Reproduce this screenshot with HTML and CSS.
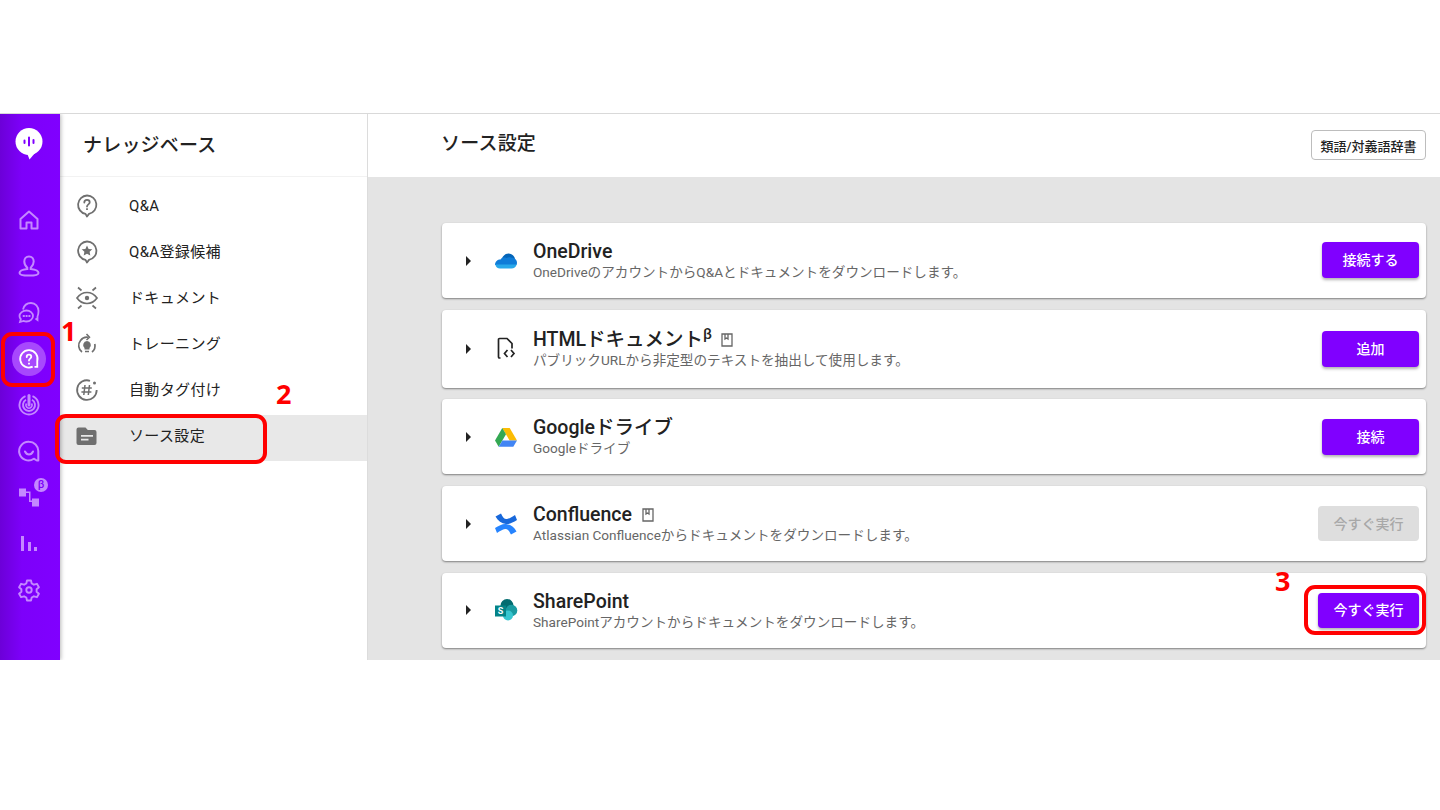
FILE: index.html
```html
<!DOCTYPE html>
<html lang="ja">
<head>
<meta charset="utf-8">
<title>ソース設定</title>
<link rel="stylesheet" href="styles.css">
</head>
<body>
<div class="top-space"></div>
<div class="app">
  <nav class="rail">
    <div class="rail-logo">
      <svg width="30" height="34" viewBox="0 0 30 34"><circle cx="15" cy="14.500" r="13.500" fill="#fff"/><path d="M13 26h8l-5.500 6.500z" fill="#fff"/><g stroke="#8000ff" stroke-width="2" stroke-linecap="round"><path d="M10.500 13.500v2.500M15 10.500v8M19.500 13v3"/></g></svg>
    </div>
    <div class="rail-item">
      <svg width="24" height="24" viewBox="0 0 24 24" fill="none" stroke="currentColor" stroke-width="2"><path d="M3.500 11L12 3.500l8.500 7.500v9.500h-6v-6h-5v6h-6z" stroke-linejoin="round"/></svg>
    </div>
    <div class="rail-item">
      <svg width="24" height="24" viewBox="0 0 24 24" fill="none" stroke="currentColor" stroke-width="2"><path d="M12 2.500c3 0 4.700 2.300 4.700 5 0 2.900-1.600 5-3 6.300v1.200c3.500.4 7.800 1.600 7.800 3.900 0 2-4 2.600-9.500 2.600s-9.500-.6-9.500-2.600c0-2.300 4.300-3.500 7.800-3.900v-1.200c-1.400-1.300-3-3.400-3-6.300 0-2.700 1.700-5 4.700-5z"/></svg>
    </div>
    <div class="rail-item">
      <svg width="24" height="24" viewBox="0 0 24 24" fill="none" stroke="currentColor" stroke-width="1.800"><path d="M6 9.500C7 5.500 10 3 14 3c4.500 0 7.500 3.500 7.500 8 0 2-.4 4-1 5.500v3.500l-2-1.500"/><path d="M9.500 10.500c3.500 0 6.500 2.500 6.500 5.500s-3 5.500-6.500 5.500c-1 0-2-.2-3-.6l-3.500 1.100.8-2.800C2.800 18 2.500 17 2.500 16c0-3 3.500-5.500 7-5.500z"/><path d="M6.500 16h.6M9.300 16h.6M12.100 16h.6" stroke-linecap="round"/></svg>
    </div>
    <div class="rail-item rail-active">
      <span class="rail-bubble">
        <svg width="24" height="24" viewBox="0 0 24 24" fill="none" stroke="#fff" stroke-width="2"><path d="M16 20.400A9.500 9.500 0 1 1 21 14.500v6h-3"/><path d="M9.500 9.800c0-1.500 1.100-2.500 2.500-2.500s2.500 1 2.500 2.300c0 2-2.500 2-2.500 4" stroke-linecap="round"/><path d="M12 16.200v1.800"/></svg>
      </span>
    </div>
    <div class="rail-item">
      <svg width="24" height="24" viewBox="0 0 24 24" fill="none" stroke="currentColor" stroke-width="1.900"><path d="M8.500 3.200a9.500 9.500 0 1 0 7 0"/><path d="M9 6.800a6 6 0 1 0 6 0"/><path d="M12 2.500v9.500" stroke-width="3" stroke-linecap="round"/><path d="M9.500 10.500a3 3 0 1 0 5 0" stroke-width="1.500"/></svg>
    </div>
    <div class="rail-item">
      <svg width="24" height="24" viewBox="0 0 24 24" fill="none" stroke="currentColor" stroke-width="2"><path d="M12 2.800a9.300 9.300 0 0 1 9.300 9.300V21.500h-1.500l-3-1.800A9.300 9.300 0 1 1 12 2.800z" stroke-linejoin="round"/><path d="M8 12.500c1 2.200 2.400 3 4 3s3-.8 4-3" stroke-linecap="round"/></svg>
    </div>
    <div class="rail-item">
      <svg width="22" height="22" viewBox="0 0 22 22" fill="currentColor"><path d="M1 2.500h7v8H1zM14 12.500h7v8h-7z"/><path d="M8 5.500h4.500v9H14V16h-3V7H8z"/></svg>
      <span class="beta-badge">β</span>
    </div>
    <div class="rail-item">
      <svg width="22" height="22" viewBox="0 0 22 22" fill="currentColor"><path d="M3 4h3v15H3zM10 10h3v9h-3zM16 15h3v4h-3z"/></svg>
    </div>
    <div class="rail-item">
      <svg width="24" height="24" viewBox="0 0 24 24" fill="none" stroke="currentColor" stroke-width="1.900" stroke-linejoin="round"><path d="M10 2.500h4l.7 3 2.200 1.200 3-.9 2 3.400-2.300 2.100v2.400l2.300 2.100-2 3.400-3-.9-2.200 1.200-.7 3h-4l-.7-3-2.200-1.200-3 .9-2-3.400 2.300-2.100v-2.400L2.100 9.200l2-3.400 3 .9 2.200-1.200z"/><circle cx="12" cy="12" r="2.700"/></svg>
    </div>
  </nav>

  <aside class="panel">
    <div class="panel-head">ナレッジベース</div>
    <ul class="menu">
      <li class="menu-item">
        <svg class="menu-icon" width="22" height="24" viewBox="0 0 22 24" fill="none" stroke="currentColor" stroke-width="1.800"><path d="M11 1.500a9.300 9.300 0 0 1 2 18.400l-2 2.600-1.500-2.600A9.300 9.300 0 0 1 11 1.500z" stroke-linejoin="round"/><path d="M8.300 8.500c0-1.500 1.200-2.600 2.700-2.600s2.700 1 2.700 2.400c0 2.100-2.700 2-2.700 4.200" stroke-linecap="round"/><path d="M11 14.200v1.700"/></svg>
        <span>Q&amp;A</span>
      </li>
      <li class="menu-item">
        <svg class="menu-icon" width="22" height="24" viewBox="0 0 22 24" fill="none" stroke="currentColor" stroke-width="1.800"><path d="M11 1.500a9.300 9.300 0 0 1 2 18.400l-2 2.600-1.500-2.600A9.300 9.300 0 0 1 11 1.500z" stroke-linejoin="round"/><path d="M11 5.500l1.600 3.400 3.700.4-2.700 2.500.7 3.700-3.300-1.800-3.300 1.800.7-3.700-2.700-2.500 3.700-.4z" fill="currentColor" stroke="none"/></svg>
        <span>Q&amp;A登録候補</span>
      </li>
      <li class="menu-item">
        <svg class="menu-icon" width="22" height="24" viewBox="0 0 22 24" fill="none" stroke="currentColor" stroke-width="1.700"><path d="M1 12c2.500-3.500 6-5.500 10-5.500S18.500 8.500 21 12c-2.500 3.500-6 5.500-10 5.500S3.500 15.500 1 12z"/><circle cx="11" cy="12" r="2.200" fill="currentColor" stroke="none"/><path d="M2 1.500l3.500 3M20 1.500l-3.500 3M2 22.500l3.500-3M20 22.500l-3.500-3"/></svg>
        <span>ドキュメント</span>
      </li>
      <li class="menu-item">
        <svg class="menu-icon" width="22" height="24" viewBox="0 0 22 24" fill="none" stroke="currentColor" stroke-width="1.700"><path d="M6 20a8 8 0 0 1-1.500-11.500A8 8 0 0 1 12 5.300M16 20a8 8 0 0 0 2.800-8"/><path d="M10.500 2l3 3.300-3 2.700" stroke-width="1.500"/><path d="M11 9a4 4 0 0 1 2.500 7v1.500h-5V16A4 4 0 0 1 11 9z" fill="currentColor" stroke="none"/><path d="M9 19.500h4" stroke-width="1.500"/></svg>
        <span>トレーニング</span>
      </li>
      <li class="menu-item">
        <svg class="menu-icon" width="24" height="24" viewBox="0 0 24 24" fill="none" stroke="currentColor" stroke-width="1.800"><path d="M15 2.800A9.800 9.800 0 1 0 21.700 12"/><circle cx="19.500" cy="5" r="1.500" fill="currentColor" stroke="none"/><path d="M10 7l-1.200 10M14.500 7l-1.200 10M6.800 10h10M6.400 14h10" stroke-width="1.500"/></svg>
        <span>自動タグ付け</span>
      </li>
      <li class="menu-item menu-active">
        <svg class="menu-icon" width="22" height="24" viewBox="0 0 22 24"><path d="M2.500 3.500h7l2.300 2.500h6.700a2 2 0 0 1 2 2V19a2 2 0 0 1-2 2h-16a2 2 0 0 1-2-2V5.500a2 2 0 0 1 2-2z" fill="currentColor"/><path d="M5 11h12v1.700H5zM5 14.800h7.500v1.700H5z" fill="#e8e8e8"/></svg>
        <span>ソース設定</span>
      </li>
    </ul>
  </aside>

  <main class="main">
    <header class="main-head">
      <h1 class="main-title">ソース設定</h1>
      <button class="dict-btn">類語/対義語辞書</button>
    </header>
    <section class="sources">
      <article class="card">
        <span class="caret"></span>
        <svg class="logo" width="24" height="24" viewBox="0 0 24 24"><path d="M7 12C8 7 11.500 4.500 14.500 4.500c3 0 5.500 2 6.500 5L14 16H6z" fill="#0364b8"/><path d="M1 16C1 12.500 3.500 10.500 6.500 10.500 8 8.500 10.500 8 12.500 9c1.500-.8 3.500-1 5-.2 3-.2 5.500 2 5.500 5 0 .8-.2 1.500-.5 2.200z" fill="#0f7cd8"/><path d="M1.300 15.500h21.400c-.8 2.500-2.700 4-5.200 4H6c-2.500 0-4.200-1.500-4.700-4z" fill="#28a8ea"/></svg>
        <div class="card-text">
          <div class="card-title">OneDrive</div>
          <div class="card-desc">OneDriveのアカウントからQ&amp;Aとドキュメントをダウンロードします。</div>
        </div>
        <button class="act act-wide act-first">接続する</button>
      </article>
      <article class="card card-tall">
        <span class="caret"></span>
        <svg class="logo" width="24" height="24" viewBox="0 0 24 24" fill="none" stroke="#222" stroke-width="1.700"><path d="M6.500 21h-1a1 1 0 0 1-1-1V2.500a1 1 0 0 1 1-1H13l5 5v5"/><path d="M13.500 13l-3 3.500 3 3.500M17 13l3 3.500-3 3.500"/></svg>
        <div class="card-text">
          <div class="card-title">HTMLドキュメント<sup class="beta">β</sup><svg class="book book-after-beta" width="12" height="14" viewBox="0 0 12 14" fill="none" stroke="#666" stroke-width="1.300"><path d="M1 1h10v12H1zM4 1v5l1.500-1 1.500 1V1"/></svg></div>
          <div class="card-desc">パブリックURLから非定型のテキストを抽出して使用します。</div>
        </div>
        <button class="act act-wide">追加</button>
      </article>
      <article class="card">
        <span class="caret"></span>
        <svg class="logo" width="24" height="24" viewBox="0 0 24 24"><path d="M8.300 3h7.400L23 15.500h-7.400z" fill="#fbbc04"/><path d="M8.300 3L1 15.500l3.700 6.300L12 9.300z" fill="#34a853"/><path d="M4.700 21.800h14.600l3.700-6.300H8.400z" fill="#4285f4"/></svg>
        <div class="card-text">
          <div class="card-title">Googleドライブ</div>
          <div class="card-desc">Googleドライブ</div>
        </div>
        <button class="act act-wide">接続</button>
      </article>
      <article class="card">
        <span class="caret"></span>
        <svg class="logo" width="24" height="24" viewBox="0 0 24 24"><path d="M1.500 4.500L7 1.500C9 5.500 10.500 7.500 13 7c2.500-.4 5-2 8-4l2 5c-4 2.500-8 4.500-11 4C7.500 11.500 4 9 1.500 4.500z" fill="#1868db"/><path d="M22.500 19.500L17 22.500C15 18.500 13.500 16.500 11 17c-2.500.4-5 2-8 4l-2-5c4-2.500 8-4.500 11-4 4.500.5 8 3 10.500 7.500z" fill="#2684ff"/></svg>
        <div class="card-text">
          <div class="card-title">Confluence<svg class="book" width="12" height="14" viewBox="0 0 12 14" fill="none" stroke="#666" stroke-width="1.300"><path d="M1 1h10v12H1zM4 1v5l1.500-1 1.500 1V1"/></svg></div>
          <div class="card-desc">Atlassian Confluenceからドキュメントをダウンロードします。</div>
        </div>
        <button class="act act-low act-off">今すぐ実行</button>
      </article>
      <article class="card">
        <span class="caret"></span>
        <svg class="logo" width="24" height="24" viewBox="0 0 24 24"><circle cx="13" cy="7.500" r="6.500" fill="#036c70"/><circle cx="17.500" cy="12.500" r="5.800" fill="#1a9ba1"/><circle cx="14" cy="17.500" r="5" fill="#37c6d0"/><rect x="1" y="7.500" width="11" height="11" fill="#038387"/><text x="6.500" y="16" class="sp-s">S</text></svg>
        <div class="card-text">
          <div class="card-title">SharePoint</div>
          <div class="card-desc">SharePointアカウントからドキュメントをダウンロードします。</div>
        </div>
        <button class="act act-low">今すぐ実行</button>
      </article>
    </section>
  </main>

  <div class="mark mark-1"></div>
  <div class="mark mark-2"></div>
  <div class="mark mark-3"></div>
  <span class="num num-1">1</span>
  <span class="num num-2">2</span>
  <span class="num num-3">3</span>
</div>
</body>
</html>
```
FILE: styles.css
```css
* { box-sizing: border-box; }
html, body { margin: 0; padding: 0; background: #fff; }
body {
  font-family: Roboto, "Noto Sans CJK JP", sans-serif;
  color: #222;
  overflow: hidden;
}
.top-space { height: 114px; border-bottom: 1px solid #d9d9d9; }
.app {
  position: relative;
  display: flex;
  height: 546px;
  overflow: hidden;
}

/* icon rail */
.rail {
  flex: 0 0 60px;
  position: relative;
  z-index: 2;
  display: flex;
  flex-direction: column;
  background: linear-gradient(90deg, #6c00d8 0, #7d00fa 22px, #8000ff 60px);
  box-shadow: 1px 0 4px rgba(0, 0, 0, .28);
  color: #c488ff;
}
.rail-logo {
  height: 60px;
  margin-bottom: 23px;
  padding-right: 2px;
  display: flex;
  align-items: center;
  justify-content: center;
}
.rail-item {
  position: relative;
  height: 46.200px;
  flex: none;
  display: flex;
  align-items: center;
  justify-content: center;
  padding-right: 2px;
}
.rail-bubble {
  width: 34px;
  height: 34px;
  border-radius: 50%;
  background: #a748fd;
  display: flex;
  align-items: center;
  justify-content: center;
}
.rail-bubble svg { width: 22px; height: 22px; }
.beta-badge {
  position: absolute;
  top: 4px;
  right: 12px;
  width: 14px;
  height: 14px;
  border-radius: 50%;
  background: #c488ff;
  color: #7d00fa;
  font-size: 11px;
  font-weight: 500;
  line-height: 14px;
  text-align: center;
}

/* second column */
.panel {
  flex: 0 0 308px;
  background: #fff;
  border-right: 1px solid #dcdcdc;
}
.panel-head {
  height: 63px;
  padding: 0 0 4px 23px;
  display: flex;
  align-items: center;
  font-size: 19px;
  font-weight: 500;
  letter-spacing: .2px;
  color: #222;
  border-bottom: 1px solid #f2f2f2;
}
.menu {
  list-style: none;
  margin: 0;
  padding: 8px 0 0;
}
.menu-item {
  height: 46px;
  padding: 0 0 4px 15px;
  display: flex;
  align-items: center;
  font-size: 15px;
  line-height: 20px;
  letter-spacing: .35px;
  color: #222;
}
.menu-icon { flex: 0 0 24px; color: #6f6f6f; margin-right: 30px; }
.menu-active { background: #e8e8e8; }

/* main */
.main {
  flex: 1;
  min-width: 0;
  display: flex;
  flex-direction: column;
  background: #e4e4e4;
}
.main-head {
  flex: 0 0 63px;
  background: #fff;
  display: flex;
  align-items: center;
  justify-content: space-between;
  padding: 0 14px 3px 73px;
}
.main-title {
  margin: 0;
  font-size: 19px;
  line-height: 26px;
  font-weight: 500;
  letter-spacing: .2px;
  color: #222;
}
.dict-btn {
  width: 115px;
  height: 30px;
  margin-top: 2px;
  padding: 0;
  background: #fff;
  border: 1px solid #bdbdbd;
  border-radius: 4px;
  font: 500 13px Roboto, "Noto Sans CJK JP", sans-serif;
  color: #222;
}
.sources {
  padding: 46px 14px 0 74px;
  display: flex;
  flex-direction: column;
  gap: 11.700px;
}
.card {
  height: 75px;
  flex: none;
  background: #fff;
  border-radius: 4px;
  box-shadow: 0 1px 2px rgba(0, 0, 0, .45);
  display: flex;
  align-items: center;
  padding: 0 7px 0 24px;
}
.card-tall { height: 78px; }
.caret {
  flex: none;
  width: 0;
  height: 0;
  border-left: 5px solid #222;
  border-top: 5px solid transparent;
  border-bottom: 5px solid transparent;
  margin-right: 23px;
}
.logo { flex: none; margin-right: 15px; }
.sp-s {
  font: 700 9px Roboto, sans-serif;
  fill: #fff;
  text-anchor: middle;
}
.card-text { flex: 1; min-width: 0; padding-top: 2px; }
.card-title {
  font-size: 19.500px;
  font-weight: 500;
  line-height: 22px;
  color: #222;
  display: flex;
  align-items: center;
}
.beta { font-size: 15px; line-height: 10px; align-self: flex-start; }
.book { margin-left: 10px; }
.book-after-beta { margin-left: 9px; }
.card-desc {
  font-size: 13.600px;
  line-height: 19px;
  color: #666;
}
.act {
  flex: none;
  width: 101px;
  height: 36px;
  padding: 0 0 2px;
  border: 0;
  border-radius: 4px;
  background: #8000ff;
  color: #fff;
  font: 500 14px Roboto, "Noto Sans CJK JP", sans-serif;
  box-shadow: 0 2px 3px rgba(0, 0, 0, .3);
}
.act-wide { width: 97px; }
.act-first { margin-bottom: 1px; }
.act-low { height: 35px; }
.act-off {
  background: #dedede;
  color: #a8a8a8;
  box-shadow: none;
}

/* red annotations drawn on top of the capture */
.mark {
  position: absolute;
  z-index: 5;
  border: 4px solid #f00;
  border-radius: 11px;
}
.mark-1 { left: 1px; top: 218px; width: 54px; height: 55px; }
.mark-2 { left: 55px; top: 300px; width: 212px; height: 50px; }
.mark-3 { left: 1304px; top: 471px; width: 122px; height: 50px; }
.num {
  position: absolute;
  z-index: 5;
  font: 700 27px/30px "Open Sans", sans-serif;
  color: #f00;
}
.num-1 { left: 61px; top: 202px; }
.num-2 { left: 276px; top: 265px; }
.num-3 { left: 1275px; top: 452px; }
```
